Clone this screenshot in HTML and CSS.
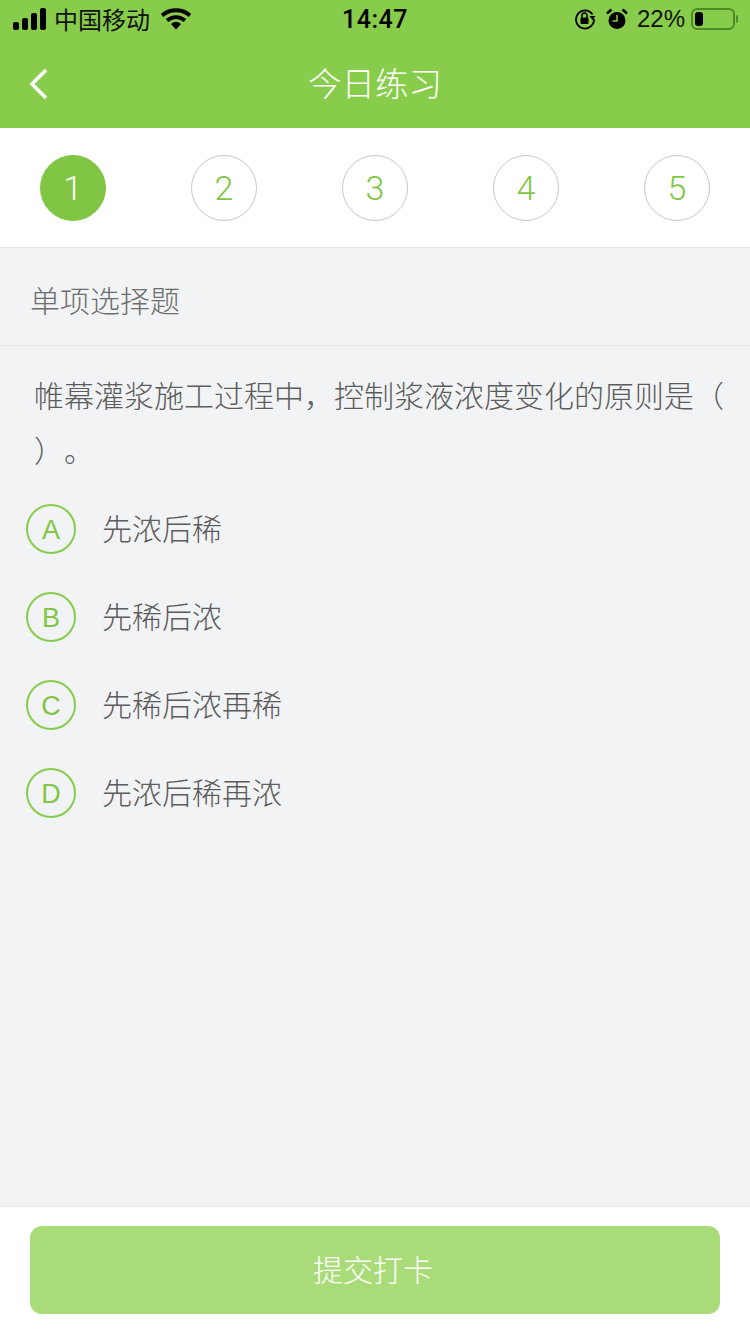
FILE: index.html
```html
<!DOCTYPE html>
<html lang="zh">
<head>
<meta charset="utf-8">
<title>今日练习</title>
<link rel="stylesheet" href="styles.css">
</head>
<body>
<div class="page">
  <header class="top">
    <div class="status">
      <div class="status-left">
        <svg class="signal" width="34" height="22" viewBox="0 0 34 22"><rect x="0" y="14" width="6" height="8" rx="2"/><rect x="9" y="10" width="6" height="12" rx="2"/><rect x="18" y="5" width="6" height="17" rx="2"/><rect x="27" y="0" width="6" height="22" rx="2"/></svg>
        <span class="carrier">中国移动</span>
        <svg class="wifi" width="30" height="22" viewBox="0 0 30 22"><path d="M1 7.500C9 .5 21 .5 29 7.500" fill="none" stroke="#000" stroke-width="4"/><path d="M6 12.500C11.500 8 18.500 8 24 12.500" fill="none" stroke="#000" stroke-width="4"/><path d="M10 16C13.500 13 16.500 13 20 16L15 21.500Z"/></svg>
      </div>
      <div class="time">14:47</div>
      <div class="status-right">
        <svg class="lock" width="22" height="22" viewBox="0 0 22 22"><path d="M18.500 6.500A9 9 0 1 0 20 11" fill="none" stroke="#000" stroke-width="1.800"/><path d="M15.500 8h6l-3 4z"/><rect x="6.500" y="9.500" width="8" height="6.500" rx="1"/><path d="M8 10V7.500a2.500 2.500 0 0 1 5 0V10" fill="none" stroke="#000" stroke-width="1.500"/></svg>
        <svg class="alarm" width="22" height="22" viewBox="0 0 22 22"><circle cx="11" cy="12.500" r="8.500"/><path d="M1 5.500 5.500 1.500M21 5.500 16.500 1.500" stroke="#000" stroke-width="2.500"/><path d="M11 7v6H6.500" fill="none" stroke="#88cc4b" stroke-width="1.500"/></svg>
        <span class="pct">22%</span>
        <div class="battery"><span class="battery-level"></span></div>
        <span class="battery-tip"></span>
      </div>
    </div>
    <nav class="nav">
      <svg class="back" width="20" height="32" viewBox="0 0 20 32"><path d="M17 2 3 16l14 14" fill="none" stroke="#fff" stroke-width="3.600"/></svg>
      <h1 class="title">今日练习</h1>
    </nav>
  </header>

  <div class="steps">
    <span class="step active">1</span>
    <span class="step">2</span>
    <span class="step">3</span>
    <span class="step">4</span>
    <span class="step">5</span>
  </div>

  <main class="content">
    <div class="kind">单项选择题</div>
    <p class="question">帷幕灌浆施工过程中，控制浆液浓度变化的原则是（ ）。</p>
    <ul class="options">
      <li class="option"><span class="letter">A</span><span class="opt-text">先浓后稀</span></li>
      <li class="option"><span class="letter">B</span><span class="opt-text">先稀后浓</span></li>
      <li class="option"><span class="letter">C</span><span class="opt-text">先稀后浓再稀</span></li>
      <li class="option"><span class="letter">D</span><span class="opt-text">先浓后稀再浓</span></li>
    </ul>
  </main>

  <footer class="foot">
    <button class="submit" type="button">提交打卡</button>
  </footer>
</div>
</body>
</html>
```
FILE: styles.css
```css
* { box-sizing: border-box; }
html, body { margin: 0; padding: 0; }
body {
  font-family: "Noto Sans CJK SC", "Liberation Sans", sans-serif;
  background: #f2f3f5;
  text-spacing-trim: space-all;
}
.page {
  width: 750px;
  height: 1334px;
  display: flex;
  flex-direction: column;
  overflow: hidden;
}
.top { background: #88cc4b; height: 128px; flex: none; }
.status {
  height: 40px;
  display: flex;
  align-items: center;
  justify-content: space-between;
  padding: 0 12px 2px 13px;
  color: #000;
  position: relative;
}
.status-left, .status-right { display: flex; align-items: center; }
.carrier { font-size: 24px; line-height: 32px; margin-left: 7px; color: #111; }
.wifi { margin-left: 11px; }
.time {
  position: absolute;
  left: 0;
  right: 0;
  text-align: center;
  font-family: Roboto, "Liberation Sans", sans-serif;
  font-size: 25px;
  font-weight: 500;
  letter-spacing: 0.5px;
}
.lock { margin-right: 10px; }
.alarm { margin-right: 9px; }
.pct {
  font-family: "Liberation Sans", sans-serif;
  font-size: 24px;
  margin-right: 6px;
  color: #111;
}
.battery {
  width: 44px;
  height: 22px;
  border: 2px solid #4e8a25;
  border-radius: 6px;
  padding: 2px;
}
.battery-level {
  display: block;
  width: 8px;
  height: 14px;
  background: #000;
  border-radius: 3px;
}
.battery-tip {
  width: 2px;
  height: 8px;
  margin-left: 1px;
  background: #4e8a25;
  border-radius: 0 2px 2px 0;
}
.nav {
  height: 88px;
  position: relative;
  display: flex;
  align-items: center;
  justify-content: center;
  padding-bottom: 5px;
}
.back { position: absolute; left: 29px; top: 28px; }
.title {
  margin: 0;
  font-size: 33.500px;
  font-weight: 300;
  color: #fff;
  line-height: 44px;
}
.steps {
  flex: none;
  height: 120px;
  background: #fff;
  border-bottom: 1px solid #e6e6e6;
  display: flex;
  justify-content: space-between;
  padding: 27px 40px 0;
}
.step {
  width: 66px;
  height: 66px;
  border-radius: 50%;
  border: 1px solid #c9c9c9;
  color: #80c644;
  font-family: Roboto, "Liberation Sans", sans-serif;
  font-size: 34px;
  font-weight: 300;
  display: flex;
  align-items: center;
  justify-content: center;
}
.step.active { background: #80c644; border-color: #80c644; color: #fff; }
.content { flex: 1; min-height: 0; color: #666; }
.kind {
  height: 98px;
  padding-left: 30px;
  padding-top: 4px;
  border-bottom: 1px solid #e6e7e9;
  display: flex;
  align-items: center;
  font-size: 30px;
  font-weight: 300;
  color: #6e6e6e;
}
.question {
  margin: 0;
  padding: 21px 20px 0 34px;
  font-size: 30px;
  font-weight: 300;
  line-height: 55px;
  color: #5c5c5c;
}
.options { list-style: none; margin: 8px 0 0; padding: 0 0 0 26px; }
.option {
  height: 88px;
  display: flex;
  align-items: center;
  font-size: 30px;
  font-weight: 300;
  color: #5c5c5c;
}
.opt-text { position: relative; top: -2px; }
.letter {
  width: 50px;
  height: 50px;
  margin-right: 26px;
  padding-top: 3px;
  border: 2px solid #88cc4b;
  border-radius: 50%;
  color: #80c644;
  font-family: "Liberation Sans", sans-serif;
  font-size: 27px;
  display: flex;
  align-items: center;
  justify-content: center;
}
.foot {
  flex: none;
  height: 128px;
  background: #fff;
  border-top: 1px solid #e6e7e9;
  padding: 19px 30px 0;
}
.submit {
  width: 100%;
  height: 88px;
  padding: 0 4px 4px 0;
  border: 0;
  border-radius: 12px;
  background: #a9dc78;
  color: #fff;
  font-family: inherit;
  font-size: 30px;
  font-weight: 300;
  display: block;
}
```
